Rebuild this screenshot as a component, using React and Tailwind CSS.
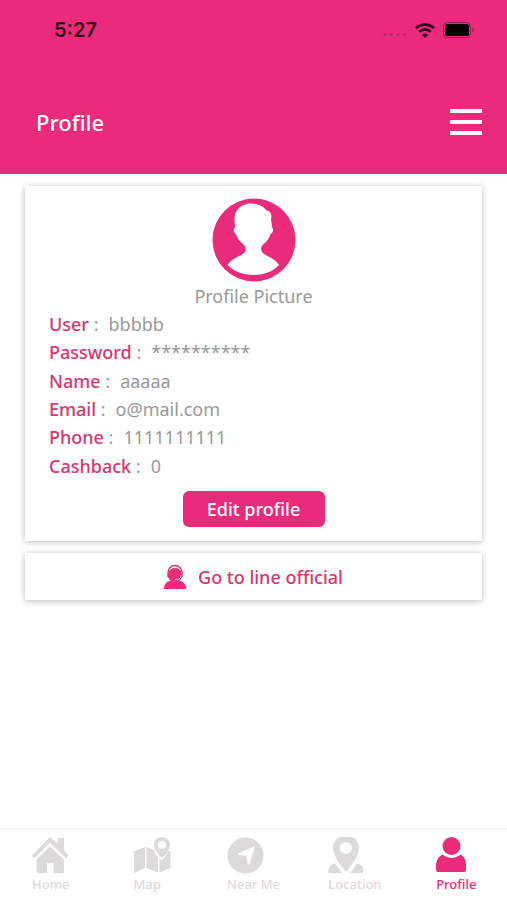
const fields = [
  { label: "User", value: "bbbbb" },
  { label: "Password", value: "**********" },
  { label: "Name", value: "aaaaa" },
  { label: "Email", value: "o@mail.com" },
  { label: "Phone", value: "1111111111" },
  { label: "Cashback", value: "0" },
];

const HomeIcon = () => (
  <svg viewBox="0 0 37 37" className="size-[37px]" fill="currentColor" aria-hidden="true">
    <path d="M18 0 25.500 6.500V1H32v12l4.500 5.500-2 3L18 6 2 21.500 0 18.500Z" />
    <path d="M4.500 22.500 18 9.500 32 22.500V34q0 2-2 2h-8.500V26h-6.500v10H6.500q-2 0-2-2Z" />
  </svg>
);

const MapIcon = () => (
  <svg viewBox="0 0 37 37" className="size-[37px]" fill="currentColor" aria-hidden="true">
    <path d="M0 14.500 11 10v21L1.500 35.500Q0 36 0 34.500Z" />
    <path d="m12.500 10 7.500 3c1 3 2.500 5.500 4 7.500v15L12.500 31Z" />
    <path d="M25.500 22c1 1.200 2.500 1.200 3.500 0 2-2.500 4-5 5-7.500l1.500-.8q1 0 1 1V31l-11 4.500Z" />
    <path
      fillRule="evenodd"
      d="M28 0c4.500 0 8 3.300 8 8 0 4-3.500 8.500-7 12q-1 1-2 0c-3.500-3.500-7-8-7-12 0-4.700 3.500-8 8-8Zm0 4a4 4 0 1 0 0 8 4 4 0 0 0 0-8Z"
    />
  </svg>
);

const NearIcon = () => (
  <svg viewBox="0 0 37 37" className="size-[37px]" aria-hidden="true">
    <circle cx="18.500" cy="18.500" r="18" fill="currentColor" />
    <path d="m28 9-16.500 7c-1 .5-.8 1.500 0 1.800l7.500 1.200 2 8c.3.800 1.200.8 1.600 0Z" fill="#fff" />
  </svg>
);

const LocationIcon = () => (
  <svg viewBox="0 0 37 37" className="size-[37px]" fill="currentColor" aria-hidden="true">
    <path
      fillRule="evenodd"
      d="M12 0h12c4.500 2 7 6 7 11 0 7-6 15-11.500 22.500q-1.500 1.500-3 0C11 26 5 18 5 11 5 6 7.500 2 12 0Zm6 5a6 6 0 1 0 0 12 6 6 0 0 0 0-12Z"
    />
    <path d="M7 26.500 14 36H3C0 36 0 34.500.5 33c.8-3.500 3-6.500 6.500-6.500ZM29 26.500c3.500 0 5.700 3 6.500 6.500.5 1.500.5 3-2.500 3H22Z" />
  </svg>
);

const ProfileIcon = () => (
  <svg viewBox="0 0 31 37" className="h-[37px] w-[31px]" fill="currentColor" aria-hidden="true">
    <circle cx="15.500" cy="9" r="9" />
    <path d="M6.500 17.500c5 4.500 13 4.500 18 0 3.500 1.500 5.500 6 5.500 11V33q0 2-2 2H2q-2 0-2-2v-4.500c0-5 3-9.500 6.500-11Z" />
  </svg>
);

const Avatar = () => (
  <svg viewBox="0 0 84 84" className="size-[84px]" role="img" aria-label="Profile Picture">
    <circle cx="42" cy="42" r="41.500" fill="#ea2a7b" />
    <path
      fill="#fff"
      d="M39 5.500C29 5.500 22.500 12 22.500 21c0 3 .3 6 .7 8.500-2 .3-2.200 5.500.8 6.500 1 4 4 8 8 11 2 3 2.500 6-.5 8.500-4 3-12 5-16 11.500C22 73.500 31 77 41.500 77S61 73.500 67 67c-4-6.500-12-8.500-15.500-11.500-3-2.500-3-5.500-1-8.500 4-3 7-7 8-11 3-1 3.300-6.200 1.300-6.500.2-3-.2-5.500-.9-8 1.100-3 .6-8.500-4.400-9C52 8.500 46 5.500 39 5.500Z"
    />
  </svg>
);

const SupportIcon = () => (
  <svg viewBox="0 0 22 24" className="h-6 w-[22px] text-[#ea2a7b]" fill="currentColor" aria-hidden="true">
    <path d="M4 12V7.500a7 7 0 0 1 14 0V12" fill="none" stroke="currentColor" strokeWidth="1.400" />
    <path d="M4 7.500C5.500 4.500 8 3 11 3s5.500 1.500 7 4.500V12c-1.200 3.500-4 5-7 5s-5.800-1.500-7-5Z" />
    <path d="M17 10c0 3.500-2 4.500-6 4.500" fill="none" stroke="#fff" strokeWidth=".8" />
    <path d="M0 24c0-5 2.500-7.500 7.500-8.500 2 2 5 2 7 0 5 1 7.500 3.500 7.500 8.500Z" />
  </svg>
);

const tabs = [
  { name: "Home", icon: HomeIcon },
  { name: "Map", icon: MapIcon },
  { name: "Near Me", icon: NearIcon },
  { name: "Location", icon: LocationIcon },
  { name: "Profile", icon: ProfileIcon, active: true },
];

const StatusBar = () => (
  <div className="flex h-[60px] items-center justify-between pr-8 pl-[54px] text-[#300717]">
    <time className="font-['Inter',sans-serif] text-xl font-semibold">5:27</time>
    <div className="flex items-center gap-2">
      <svg viewBox="0 0 24 16" className="h-4 w-6" fill="#c02266" aria-hidden="true">
        <circle cx="2" cy="12.500" r="1.600" />
        <circle cx="8.500" cy="12.500" r="1.600" />
        <circle cx="15" cy="12.500" r="1.600" />
        <circle cx="21.500" cy="12.500" r="1.600" />
      </svg>
      <svg viewBox="0 0 20 15" className="h-[15px] w-5" fill="none" stroke="currentColor" aria-hidden="true">
        <path d="M1 5.200c5-4.700 13-4.700 18 0M4.300 8.700c3.300-3 8.100-3 11.400 0" strokeWidth="2.800" />
        <path d="m10 15-3.200-3.300c1.900-1.600 4.500-1.600 6.400 0Z" fill="currentColor" stroke="none" />
      </svg>
      <svg viewBox="0 0 32 16" className="h-4 w-8" aria-hidden="true">
        <rect x=".5" y=".5" width="27" height="15" rx="4" fill="none" stroke="#98184f" />
        <rect x="2" y="2" width="24" height="12" rx="2.500" fill="#080104" />
        <path d="M29.500 5.500c2 .8 2 4.200 0 5Z" fill="#98184f" />
      </svg>
    </div>
  </div>
);

const App = () => {
  return (
    <div className="flex min-h-screen flex-col bg-white font-['Noto_Sans',sans-serif]">
      <header className="bg-[#ea2a7b] pb-9 text-white">
        <StatusBar />
        <div className="flex h-[78px] items-end justify-between pr-[25px] pl-9">
          <h1 className="text-[22px] leading-8 font-medium">Profile</h1>
          <button type="button" aria-label="Open menu" className="flex w-8 flex-col gap-[7px] pb-[3px]">
            <span className="h-1 w-full bg-white" />
            <span className="h-1 w-full bg-white" />
            <span className="h-1 w-full bg-white" />
          </button>
        </div>
      </header>

      <main className="flex flex-1 flex-col gap-3 px-[25px] pt-3">
        <section className="flex flex-col items-center bg-white pt-3 pb-[14px] shadow-[0_1px_6px_rgba(0,0,0,0.28)]">
          <Avatar />
          <p className="text-lg leading-7 text-[#999999]">Profile Picture</p>
          <dl className="grid h-[170px] w-full px-6 text-lg">
            {fields.map((field) => (
              <div key={field.label} className="flex items-center gap-2.5">
                <dt className="font-medium text-[#d83573]">
                  {field.label} <span className="font-normal text-[#999999]">:</span>
                </dt>
                <dd className="text-[#999999]">{field.value}</dd>
              </div>
            ))}
          </dl>
          <button
            type="button"
            className="mt-[11px] h-9 w-[142px] rounded-md bg-[#ea2a7b] text-lg leading-9 font-medium text-white"
          >
            Edit profile
          </button>
        </section>

        <a
          href="#line"
          className="flex h-[47px] items-center justify-center gap-3 bg-white text-lg font-medium text-[#d83573] shadow-[0_1px_6px_rgba(0,0,0,0.28)]"
        >
          <SupportIcon />
          Go to line official
        </a>
      </main>

      <nav className="grid h-[72px] grid-cols-5 border-t-2 border-[#f6f6f6] pt-[7px]">
        {tabs.map(({ name, icon: Icon, active }) => (
          <a
            key={name}
            href={`#${name}`}
            aria-current={active ? "page" : undefined}
            className={`flex justify-center text-[13px] leading-4 font-medium ${active ? "text-[#ea2a7b]" : "text-[#dddadb]"}`}
          >
            <span className="flex flex-col items-start gap-0.5">
              <Icon />
              {name}
            </span>
          </a>
        ))}
      </nav>
    </div>
  );
};

export default App;
